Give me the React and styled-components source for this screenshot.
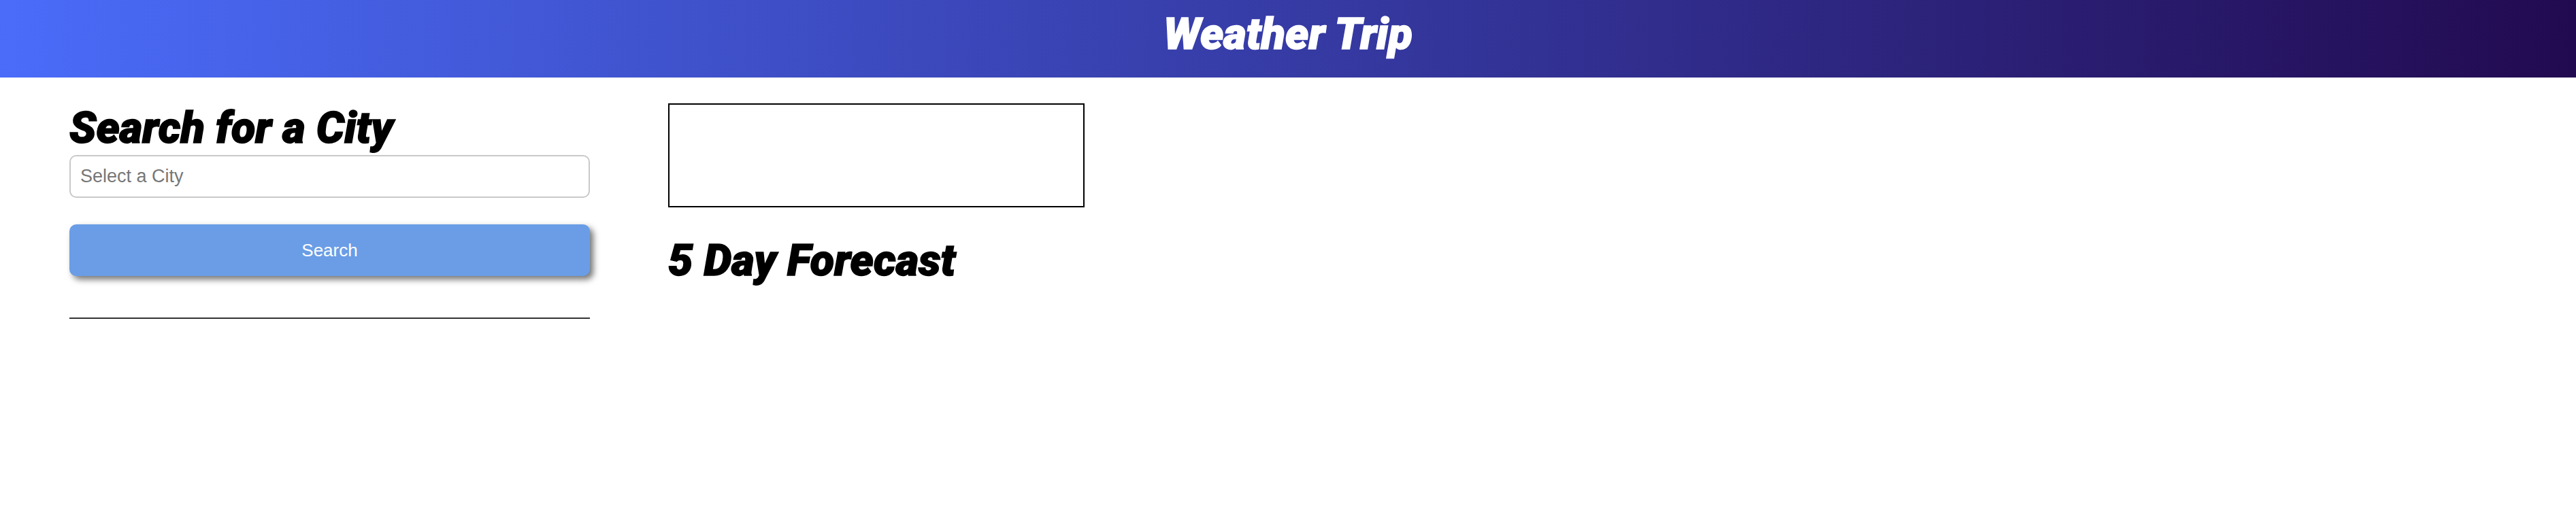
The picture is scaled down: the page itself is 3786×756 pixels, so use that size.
import React from "react";
import styled, { createGlobalStyle } from "styled-components";

const Global = createGlobalStyle`
  html, body { margin: 0; padding: 0; background: #fff; }
  body { font-family: "Liberation Sans", Arial, sans-serif; }
  * { box-sizing: border-box; }
`;

const Header = styled.header`
  height: 114px;
  padding-top: 18px;
  background: linear-gradient(to right, #4a6cf9, #220a50);
  text-align: center;
`;

const Title = styled.h1`
  margin: 0;
  font-family: Roboto, "Noto Sans", sans-serif;
  font-weight: 900;
  font-style: italic;
  font-size: 65px;
  line-height: 64px;
  color: #fff;
  -webkit-text-stroke: 1.5px #fff;
`;

const Main = styled.main`
  display: flex;
  align-items: flex-start;
  gap: 115px;
  padding: 37px 0 0 102px;
`;

const Sidebar = styled.section`
  width: 765px;
  display: flex;
  flex-direction: column;
`;

const Heading = styled.h2`
  margin: 0;
  font-family: Roboto, "Noto Sans", sans-serif;
  font-weight: 900;
  font-style: italic;
  font-size: 65px;
  line-height: 75px;
  color: #000;
  -webkit-text-stroke: 1.5px #000;
`;

const CityInput = styled.input`
  margin-top: 2px;
  height: 63px;
  width: 100%;
  padding: 0 14px;
  border: 2px solid #c9c9c9;
  border-radius: 10px;
  font-family: "Liberation Sans", Arial, sans-serif;
  font-size: 27px;
  color: #333;
  outline: none;
  &::placeholder { color: #777; }
`;

const SearchButton = styled.button`
  margin-top: 39px;
  height: 76px;
  width: 100%;
  border: none;
  border-radius: 10px;
  background: #6a9de6;
  color: #fff;
  font-family: "Liberation Sans", Arial, sans-serif;
  font-size: 26px;
  box-shadow: 5px 5px 10px rgba(0, 0, 0, 0.55);
  cursor: pointer;
`;

const Divider = styled.hr`
  margin: 61px 0 0;
  border: none;
  border-top: 2px solid #333;
`;

const Content = styled.section`
  display: flex;
  flex-direction: column;
`;

const TodayBox = styled.div`
  margin-top: 1px;
  width: 612px;
  height: 153px;
  border: 2px solid #000;
`;

const ForecastHeading = styled(Heading)`
  margin-top: 41px;
`;

export default function App() {
  return (
    <>
      <Global />
      <Header>
        <Title>Weather Trip</Title>
      </Header>
      <Main>
        <Sidebar>
          <Heading>Search for a City</Heading>
          <CityInput placeholder="Select a City" />
          <SearchButton>Search</SearchButton>
          <Divider />
        </Sidebar>
        <Content>
          <TodayBox />
          <ForecastHeading>5 Day Forecast</ForecastHeading>
        </Content>
      </Main>
    </>
  );
}
